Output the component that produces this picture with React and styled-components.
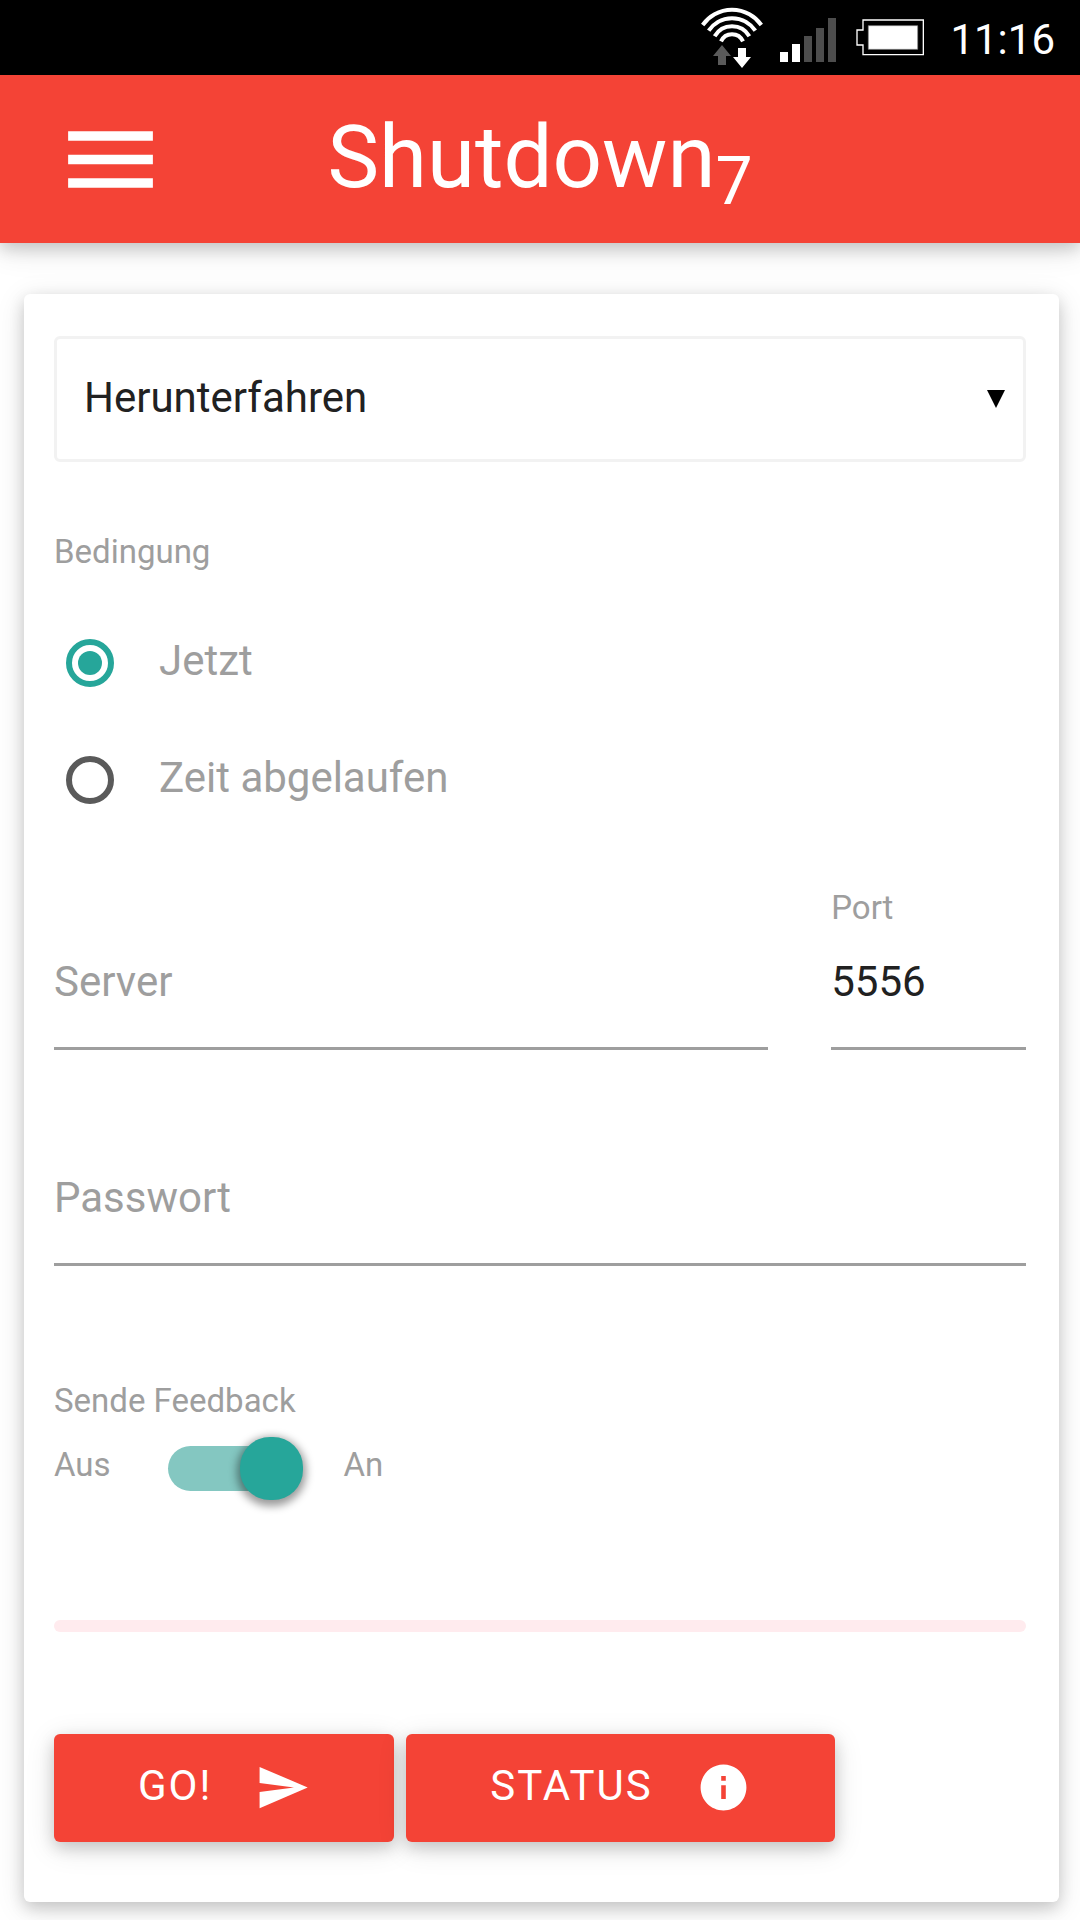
import React, { useState } from 'react';
import styled, { createGlobalStyle } from 'styled-components';

const RED = '#f44336';
const TEAL = '#26a69a';
const GREY = '#9e9e9e';
const SHADOW = '0 6px 15px rgba(0, 0, 0, 0.16), 0 6px 30px rgba(0, 0, 0, 0.12)';

const GlobalStyle = createGlobalStyle`
  *, *::before, *::after {
    box-sizing: border-box;
  }
  body {
    margin: 0;
    background-color: #fff;
    color: #212121;
    font-family: Roboto, "Liberation Sans", sans-serif;
    font-size: 42px;
  }
  input, select, button {
    font: inherit;
    color: inherit;
    margin: 0;
  }
`;

const StatusBar = styled.div`
  display: flex;
  align-items: center;
  justify-content: flex-end;
  gap: 17px;
  height: 75px;
  padding-right: 25px;
  background-color: #000;
  color: #fff;

  svg {
    display: block;
  }
`;

const Clock = styled.time`
  padding: 4px 0 0 8px;
  line-height: 48px;
`;

const NavBar = styled.header`
  display: grid;
  grid-template-columns: 1fr auto 1fr;
  align-items: center;
  height: 168px;
  padding: 0 54px;
  background-color: ${RED};
  color: #fff;
  box-shadow: ${SHADOW};
`;

const MenuButton = styled.button`
  justify-self: start;
  padding: 0;
  border: none;
  background: none;
  cursor: pointer;

  svg {
    display: block;
  }
`;

const Title = styled.h1`
  margin: 0;
  padding-bottom: 4px;
  font-size: 87px;
  font-weight: 400;
  line-height: 120px;

  sub {
    font-size: 66px;
    line-height: 0;
    position: relative;
    vertical-align: baseline;
    bottom: -0.25em;
  }
`;

const Card = styled.form`
  display: flex;
  flex-direction: column;
  margin: 51px 21px 18px 24px;
  padding: 42px 33px 60px 30px;
  background-color: #fff;
  border-radius: 6px;
  box-shadow: ${SHADOW};
`;

const SelectBox = styled.div`
  display: grid;
  align-items: center;

  > * {
    grid-area: 1 / 1;
  }

  svg {
    justify-self: end;
    margin-right: 21px;
    pointer-events: none;
  }
`;

const Select = styled.select`
  appearance: none;
  width: 100%;
  height: 126px;
  padding: 0 60px 4px 27px;
  border: 3px solid #f2f2f2;
  border-radius: 6px;
  background-color: #fff;
`;

const Conditions = styled.fieldset`
  margin: 70px 0 0;
  padding: 0;
  border: none;
`;

const Caption = styled.span`
  display: block;
  padding: 0;
  color: ${GREY};
  font-size: 33px;
  line-height: 40px;
`;

const RadioList = styled.div`
  margin-top: 32px;
`;

const RadioRow = styled.label`
  display: flex;
  align-items: center;
  gap: 45px;
  height: 117px;
  padding-left: 12px;
  color: ${GREY};
`;

const RadioText = styled.span`
  padding-bottom: 4px;
`;

const Radio = styled.input`
  appearance: none;
  width: 48px;
  height: 48px;
  padding: 6px;
  border: 6px solid #5a5a5a;
  border-radius: 50%;

  &:checked {
    border-color: ${TEAL};
    background: ${TEAL} content-box;
  }
`;

const ServerRow = styled.div`
  display: grid;
  grid-template-columns: 11fr 3fr;
  align-items: end;
  gap: 63px;
  margin: 50px 0 94px;
`;

const Field = styled.label`
  display: block;
`;

const TextInput = styled.input`
  display: block;
  width: 100%;
  height: 122px;
  padding: 0 0 13px;
  border: none;
  border-bottom: 3px solid ${GREY};
  border-radius: 0;
  background: none;
  outline: none;

  &::placeholder {
    color: ${GREY};
    opacity: 1;
  }
`;

const Feedback = styled.div`
  margin-top: 115px;
`;

const SwitchRow = styled.label`
  display: flex;
  align-items: center;
  height: 63px;
  margin-top: 16px;

  ${Caption} {
    padding-bottom: 8px;
  }
`;

const Switch = styled.input`
  appearance: none;
  display: flex;
  align-items: center;
  width: 120px;
  height: 45px;
  margin: 0 56px 0 57px;
  border-radius: 24px;
  background-color: ${(props) => (props.checked ? '#84c7c1' : '#818181')};

  &::before {
    content: '';
    flex: none;
    width: 63px;
    height: 63px;
    margin-left: ${(props) => (props.checked ? '72px' : '-15px')};
    border-radius: 30px;
    background-color: ${(props) => (props.checked ? TEAL : '#f1f1f1')};
    box-shadow: 0 3px 9px 3px rgba(0, 0, 0, 0.4);
  }
`;

const Progress = styled.progress`
  appearance: none;
  display: block;
  width: 100%;
  height: 12px;
  margin: 120px 0 102px;
  border: none;
  border-radius: 6px;
  background-color: #ffebee;
  overflow: hidden;

  &::-webkit-progress-bar {
    background-color: #ffebee;
  }
  &::-webkit-progress-value {
    background-color: ${RED};
  }
`;

const Actions = styled.div`
  display: flex;
  flex-wrap: wrap;
  gap: 12px;
`;

const Button = styled.button`
  display: flex;
  align-items: center;
  gap: 43px;
  height: 108px;
  padding: 0 84px 2px;
  border: none;
  border-radius: 6px;
  background-color: ${RED};
  color: #fff;
  letter-spacing: 2px;
  text-transform: uppercase;
  box-shadow: ${SHADOW};
  cursor: pointer;

  span {
    padding-bottom: 4px;
  }
`;

const Icon = ({ size, path }) => (
  <svg width={size} height={size} viewBox="0 0 24 24" fill="currentColor" aria-hidden="true">
    <path d={path} />
  </svg>
);

const WifiIcon = () => (
  <svg width="67" height="75" viewBox="51 0 201 225" aria-hidden="true">
    <g fill="none" stroke="#fff" strokeWidth="12">
      <path d="M71 75 A108 108 0 0 1 247 75" />
      <path d="M89 92 A84 84 0 0 1 229 92" />
      <path d="M107 109 A60 60 0 0 1 211 109" />
      <path d="M126 124 A36 36 0 0 1 192 124" />
    </g>
    <path fill="#5a5a5a" d="M129 135 L156 168 H141 V195 H117 V168 H102 Z" />
    <path fill="#fff" d="M177 144 H201 V171 H216 L189 204 L162 171 H177 Z" />
  </svg>
);

const SignalIcon = () => (
  <svg width="56" height="75" viewBox="0 0 56 75" aria-hidden="true">
    <path fill="#fff" d="M0 52h8v10H0zM12 44h8v18h-8z" />
    <path fill="#4d4d4d" d="M24 36h8v26h-8zM36 28h8v34h-8zM48 18h8v44h-8z" />
  </svg>
);

const BatteryIcon = () => (
  <svg width="72" height="75" viewBox="522 0 216 225" aria-hidden="true">
    <path fill="none" stroke="#fff" strokeWidth="4" d="M552 60 H733 V164 H552 V135 H534 V90 H552 Z" />
    <path fill="#fff" stroke="#8a8a8a" strokeWidth="2" d="M568 77 H716 V148 H568 Z" />
  </svg>
);

const App = () => {
  const [condition, setCondition] = useState('now');
  const [port, setPort] = useState('5556');
  const [feedback, setFeedback] = useState(true);

  const submitHandler = (event) => {
    event.preventDefault();
  };

  return (
    <>
      <GlobalStyle />
      <StatusBar>
        <WifiIcon />
        <SignalIcon />
        <BatteryIcon />
        <Clock>11:16</Clock>
      </StatusBar>

      <NavBar>
        <MenuButton type="button" aria-label="Menü">
          <Icon size={113} path="M3 18h18v-2H3v2zm0-5h18v-2H3v2zm0-7v2h18V6H3z" />
        </MenuButton>
        <Title>Shutdown<sub>7</sub></Title>
      </NavBar>

      <Card onSubmit={submitHandler}>
        <SelectBox>
          <Select aria-label="Aktion" defaultValue="shutdown">
            <option value="shutdown">Herunterfahren</option>
          </Select>
          <svg width="18" height="18" viewBox="0 0 18 18" aria-hidden="true">
            <path d="M0 0h18L9 18z" />
          </svg>
        </SelectBox>

        <Conditions>
          <Caption as="legend">Bedingung</Caption>
          <RadioList>
            <RadioRow>
              <Radio
                type="radio"
                name="condition"
                checked={condition === 'now'}
                onChange={() => setCondition('now')}
              />
              <RadioText>Jetzt</RadioText>
            </RadioRow>
            <RadioRow>
              <Radio
                type="radio"
                name="condition"
                checked={condition === 'time'}
                onChange={() => setCondition('time')}
              />
              <RadioText>Zeit abgelaufen</RadioText>
            </RadioRow>
          </RadioList>
        </Conditions>

        <ServerRow>
          <TextInput type="text" placeholder="Server" aria-label="Server" />
          <Field>
            <Caption>Port</Caption>
            <TextInput type="text" value={port} onChange={(event) => setPort(event.target.value)} />
          </Field>
        </ServerRow>
        <TextInput type="password" placeholder="Passwort" aria-label="Passwort" />

        <Feedback>
          <Caption id="feedback">Sende Feedback</Caption>
          <SwitchRow>
            <Caption>Aus</Caption>
            <Switch
              type="checkbox"
              aria-labelledby="feedback"
              checked={feedback}
              onChange={() => setFeedback(!feedback)}
            />
            <Caption>An</Caption>
          </SwitchRow>
        </Feedback>

        <Progress value="0" max="100" aria-label="Fortschritt" />

        <Actions>
          <Button type="submit">
            <span>Go!</span>
            <Icon size={55} path="M2.01 21L23 12 2.01 3 2 10l15 2-15 2z" />
          </Button>
          <Button type="button">
            <span>Status</span>
            <Icon
              size={55}
              path="M12 2C6.48 2 2 6.48 2 12s4.48 10 10 10 10-4.48 10-10S17.52 2 12 2zm1 15h-2v-6h2v6zm0-8h-2V7h2v2z"
            />
          </Button>
        </Actions>
      </Card>
    </>
  );
};

export default App;
